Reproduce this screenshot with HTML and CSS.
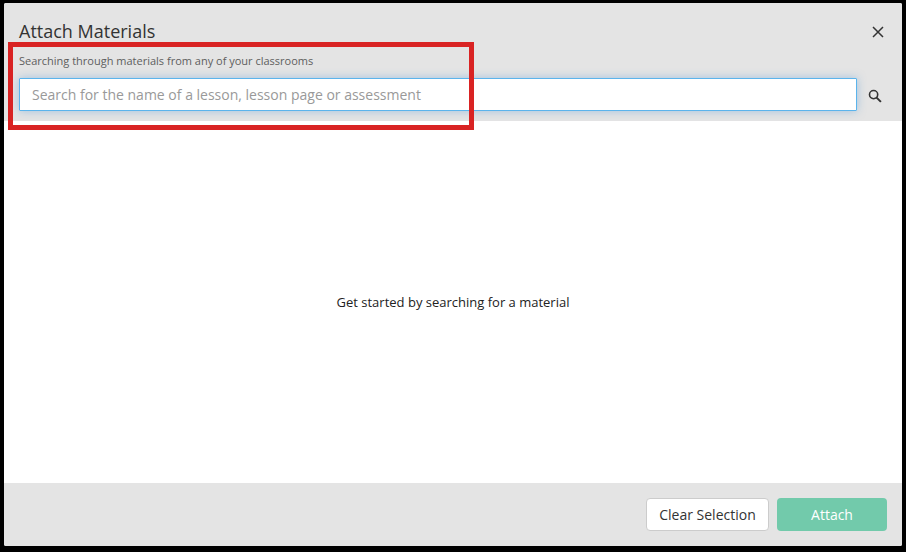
FILE: index.html
```html
<!DOCTYPE html>
<html lang="en">
<head>
<meta charset="utf-8">
<title>Attach Materials</title>
<link rel="stylesheet" href="styles.css">
</head>
<body>
<div class="modal">
  <header class="head">
    <div class="title-row">
      <h1 class="title">Attach Materials</h1>
      <button class="icon-btn close-btn" aria-label="Close">
        <svg width="12" height="12" viewBox="0 0 12 12"><path d="M1 1l10 10M11 1L1 11" stroke="#333" stroke-width="1.5" fill="none"/></svg>
      </button>
    </div>
    <p class="hint">Searching through materials from any of your classrooms</p>
    <div class="search-row">
      <input class="search" type="text" placeholder="Search for the name of a lesson, lesson page or assessment">
      <button class="icon-btn search-btn" aria-label="Search">
        <svg width="14" height="14" viewBox="0 0 14 14"><circle cx="5.6" cy="5.6" r="4.1" stroke="#333" stroke-width="1.6" fill="none"/><path d="M8.6 8.6l4.3 4.3" stroke="#333" stroke-width="2" fill="none"/></svg>
      </button>
    </div>
  </header>
  <main class="body">Get started by searching for a material</main>
  <footer class="foot">
    <button class="btn btn-light">Clear Selection</button>
    <button class="btn btn-green">Attach</button>
  </footer>
</div>
<div class="annotation"></div>
</body>
</html>
```
FILE: styles.css
```css
* { box-sizing: border-box; }
html, body { height: 100%; }
body {
  margin: 0;
  background: #000;
  padding: 3px 4px 6px;
  font-family: "Open Sans", "Liberation Sans", sans-serif;
  color: #333;
  position: relative;
  overflow: hidden;
}
.modal {
  height: 543px;
  display: flex;
  flex-direction: column;
  background: #fff;
  border-radius: 2px;
  overflow: hidden;
}
.head {
  height: 118px;
  background: #e4e4e4;
  padding: 15px 0 0 15px;
}
.title-row {
  display: flex;
  justify-content: space-between;
  align-items: center;
  height: 26px;
  padding-right: 18px;
}
.title {
  margin: 0;
  font-size: 18px;
  font-weight: 400;
  line-height: 26px;
  color: #333;
}
.icon-btn {
  display: flex;
  padding: 0;
  border: 0;
  background: none;
}
.close-btn { margin-top: 2px; }
.hint {
  margin: 9px 0 0;
  font-size: 11px;
  line-height: 16px;
  color: #5e5e5e;
}
.search-row {
  display: flex;
  align-items: center;
  margin-top: 9px;
}
.search {
  width: 838px;
  height: 33px;
  padding: 0 12px;
  border: 1px solid #5bb4ec;
  border-radius: 1px;
  outline: 0;
  background: #fff;
  font: 14px "Open Sans", "Liberation Sans", sans-serif;
  box-shadow: 0 0 8px rgba(91, 160, 220, 0.5);
}
.search::placeholder { color: #999; opacity: 1; }
.search-btn { margin: 2px 0 0 11px; }
.body {
  flex: 1;
  display: flex;
  align-items: center;
  justify-content: center;
  font-size: 13px;
  color: #222;
}
.foot {
  height: 63px;
  background: #e4e4e4;
  display: flex;
  justify-content: flex-end;
  align-items: flex-start;
  gap: 8px;
  padding: 15px 15px 0 0;
}
.btn {
  height: 33px;
  border-radius: 4px;
  font: 14px "Open Sans", "Liberation Sans", sans-serif;
}
.btn-light {
  width: 123px;
  background: #fff;
  border: 1px solid #ccc;
  color: #333;
}
.btn-green {
  width: 110px;
  background: #72caab;
  border: 0;
  color: #fff;
}
.annotation {
  position: absolute;
  left: 8px;
  top: 42px;
  width: 466px;
  height: 88px;
  border: 5px solid #d92323;
}
```
